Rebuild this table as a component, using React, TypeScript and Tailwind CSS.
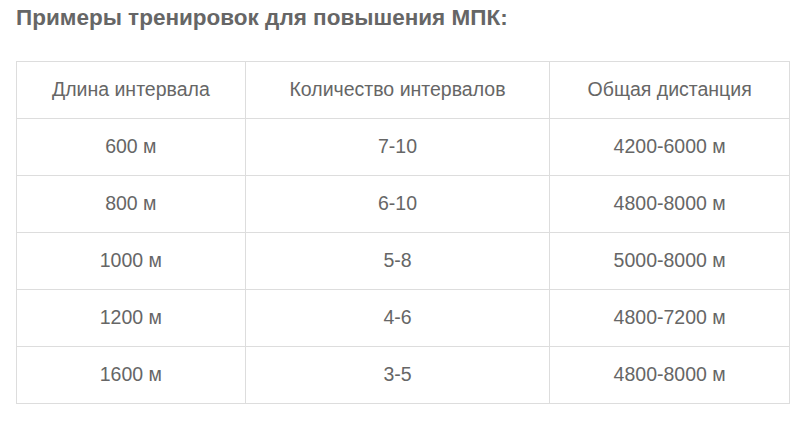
import React from "react";

const rows = [
  ["600 м", "7-10", "4200-6000 м"],
  ["800 м", "6-10", "4800-8000 м"],
  ["1000 м", "5-8", "5000-8000 м"],
  ["1200 м", "4-6", "4800-7200 м"],
  ["1600 м", "3-5", "4800-8000 м"],
];

export default function App() {
  return (
    <div className="w-[804px] h-[422px] bg-white pl-[16px] pt-[4px]" style={{ fontFamily: '"Liberation Sans", Arial, sans-serif' }}>
      <h2 className="text-[22.5px] leading-[28px] font-bold text-[#666666]">Примеры тренировок для повышения МПК:</h2>
      <table className="mt-[29px] w-[774px] border-collapse text-[19.5px] text-[#666666]">
        <colgroup>
          <col className="w-[229px]" />
          <col className="w-[305px]" />
          <col className="w-[240px]" />
        </colgroup>
        <thead>
          <tr className="h-[57px]">
            {["Длина интервала", "Количество интервалов", "Общая дистанция"].map((h) => (
              <th key={h} className="border border-[#dddddd] font-normal text-center p-0">{h}</th>
            ))}
          </tr>
        </thead>
        <tbody>
          {rows.map((r) => (
            <tr key={r[0]} className="h-[57px]">
              {r.map((c, i) => (
                <td key={i} className="border border-[#dddddd] text-center p-0">{c}</td>
              ))}
            </tr>
          ))}
        </tbody>
      </table>
    </div>
  );
}
